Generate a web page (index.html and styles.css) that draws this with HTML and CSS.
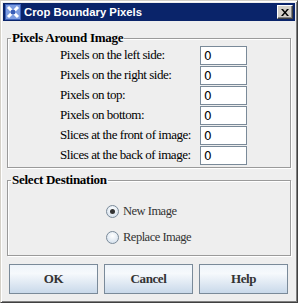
FILE: index.html
```html
<!DOCTYPE html>
<html>
<head>
<meta charset="utf-8">
<link rel="stylesheet" href="styles.css">
</head>
<body>
<div class="window">
  <div class="titlebar">
    <svg class="appicon" width="16" height="16" viewBox="0 0 16 16">
      <rect x="0" y="0" width="16" height="16" fill="#3a5fb8"/>
      <rect x="1" y="1" width="14" height="14" fill="#7d9ce0"/>
      <path d="M3 3 L13 13 M13 3 L3 13" stroke="#ffffff" stroke-width="3"/>
      <circle cx="8" cy="8" r="2.5" fill="#3a5fb8"/>
    </svg>
    <span class="title">Crop Boundary Pixels</span>
    <span class="closebtn">
      <svg width="8" height="7" viewBox="0 0 8 7"><path d="M0 0h2l2 2.5L6 0h2L5 3.5 8 7H6L4 4.5 2 7H0l3-3.5z" fill="#000"/></svg>
    </span>
  </div>
  <div class="content">
    <fieldset class="group around">
      <legend>Pixels Around Image</legend>
      <div class="rows">
        <div class="row"><span class="label">Pixels on the left side:</span><span class="field">0</span></div>
        <div class="row"><span class="label">Pixels on the right side:</span><span class="field">0</span></div>
        <div class="row"><span class="label">Pixels on top:</span><span class="field">0</span></div>
        <div class="row"><span class="label">Pixels on bottom:</span><span class="field">0</span></div>
        <div class="row"><span class="label">Slices at the front of image:</span><span class="field">0</span></div>
        <div class="row"><span class="label">Slices at the back of image:</span><span class="field">0</span></div>
      </div>
    </fieldset>
    <fieldset class="group dest">
      <legend>Select Destination</legend>
      <div class="radios">
        <div class="radio"><span class="dot checked"></span><span>New Image</span></div>
        <div class="radio"><span class="dot"></span><span>Replace Image</span></div>
      </div>
    </fieldset>
    <div class="buttons">
      <div class="btn">OK</div>
      <div class="btn">Cancel</div>
      <div class="btn">Help</div>
    </div>
  </div>
</div>
</body>
</html>
```
FILE: styles.css
```css
html, body {
  margin: 0;
  padding: 0;
  background: #eeeeee;
}
.window {
  width: 298px;
  height: 303px;
  box-sizing: border-box;
  background: #eeeeee;
  border-top: 1px solid #d4d0c8;
  border-left: 1px solid #d4d0c8;
  border-right: 1px solid #404040;
  border-bottom: 1px solid #404040;
  box-shadow: inset 1px 1px 0 #ffffff, inset -1px -1px 0 #808080;
  padding: 2px;
  display: flex;
  flex-direction: column;
  font-family: "Liberation Serif", "Times New Roman", serif;
}
.titlebar {
  height: 18px;
  background: #0a246a;
  display: flex;
  align-items: center;
  padding: 0 2px 0 2px;
  flex-shrink: 0;
}
.appicon {
  display: block;
  margin-right: 3px;
}
.title {
  color: #ffffff;
  font-family: "Liberation Sans", Arial, sans-serif;
  font-weight: bold;
  font-size: 11.3px;
  flex: 1;
}
.closebtn {
  width: 16px;
  height: 14px;
  box-sizing: border-box;
  background: #d4d0c8;
  border-top: 1px solid #ffffff;
  border-left: 1px solid #ffffff;
  border-right: 1px solid #404040;
  border-bottom: 1px solid #404040;
  box-shadow: inset -1px -1px 0 #808080;
  display: flex;
  align-items: center;
  justify-content: center;
}
.closebtn svg { display: block; }
.content {
  flex: 1;
  display: flex;
  flex-direction: column;
  padding: 9px 4px 0 4px;
}
.group {
  margin: 0;
  padding: 0;
  box-sizing: border-box;
  border: 1px solid #9a9a9a;
  box-shadow: inset 1px 1px 0 #ffffff, 1px 1px 0 #ffffff;
  font-family: "Liberation Serif", "Times New Roman", serif;
}
.group legend {
  font-family: "Liberation Serif", "Times New Roman", serif;
  font-weight: bold;
  font-size: 13px;
  letter-spacing: -0.25px;
  line-height: 16px;
  padding: 0 1px;
  margin-left: 3px;
  color: #000;
}
.around {
  height: 138px;
}
.rows {
  display: flex;
  flex-direction: column;
  margin-top: -1px;
  padding-left: 52px;
}
.row {
  display: flex;
  align-items: center;
  height: 20px;
}
.label {
  flex: none;
  width: 140px;
  white-space: nowrap;
  font-family: "Liberation Serif", "Times New Roman", serif;
  font-size: 13px;
  letter-spacing: -0.45px;
  color: #000;
}
.field {
  flex: none;
  width: 47px;
  height: 19px;
  box-sizing: border-box;
  border: 1px solid #7a8a99;
  background: #ffffff;
  font-family: "DejaVu Sans", sans-serif;
  font-size: 12px;
  padding: 2px 0 0 3px;
  line-height: 15px;
}
.dest {
  margin-top: 4px;
  height: 84px;
}
.radios {
  display: flex;
  flex-direction: column;
  padding: 13px 0 0 98px;
  gap: 6px;
}
.radio {
  display: flex;
  align-items: center;
  gap: 4px;
  font-family: "Liberation Serif", "Times New Roman", serif;
  font-size: 12.5px;
  letter-spacing: -0.5px;
  color: #333;
  height: 20px;
}
.dot {
  flex: none;
  width: 13px;
  height: 13px;
  box-sizing: border-box;
  border-radius: 50%;
  border: 1px solid #7a8a99;
  background: radial-gradient(circle at 50% 35%, #ffffff, #cddbe9);
  position: relative;
}
.dot.checked::after {
  content: "";
  position: absolute;
  left: 3px;
  top: 3px;
  width: 5px;
  height: 5px;
  border-radius: 50%;
  background: #333333;
}
.buttons {
  display: flex;
  gap: 6px;
  padding: 8px 3px 0 2px;
}
.btn {
  flex: 1;
  height: 30px;
  box-sizing: border-box;
  border: 1px solid #7a8a99;
  background: linear-gradient(#eef4fa, #f6f9fc 30%, #c9d9ea);
  display: flex;
  align-items: center;
  justify-content: center;
  font-family: "Liberation Serif", "Times New Roman", serif;
  font-weight: bold;
  font-size: 13px;
  letter-spacing: -0.4px;
  color: #333;
}
```
